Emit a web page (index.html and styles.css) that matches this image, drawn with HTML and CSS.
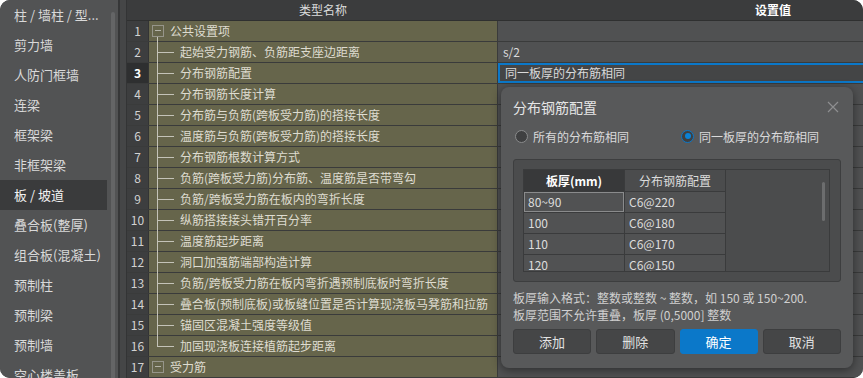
FILE: index.html
```html
<!DOCTYPE html>
<html lang="zh-CN">
<head>
<meta charset="utf-8">
<title>分布钢筋配置</title>
<link rel="stylesheet" href="styles.css">
</head>
<body>
<div class="app">
  <aside class="sidebar">
    <ul class="nav">
      <li>柱 / 墙柱 / 型...</li>
      <li>剪力墙</li>
      <li>人防门框墙</li>
      <li>连梁</li>
      <li>框架梁</li>
      <li>非框架梁</li>
      <li class="active">板 / 坡道</li>
      <li>叠合板(整厚)</li>
      <li>组合板(混凝土)</li>
      <li>预制柱</li>
      <li>预制梁</li>
      <li>预制墙</li>
      <li>空心楼盖板</li>
    </ul>
    <div class="sb-track"><div class="sb-thumb"></div></div>
  </aside>
  <div class="divider"></div>
  <div class="gap"></div>
  <div class="grid">
    <div class="row head">
      <div class="c-num"></div>
      <div class="c-name">类型名称</div>
      <div class="c-val">设置值</div>
    </div>
    <div class="row">
      <div class="c-num">1</div>
      <div class="c-name group open"><span class="exp"></span>公共设置项</div>
      <div class="c-val"></div>
    </div>
    <div class="row">
      <div class="c-num">2</div>
      <div class="c-name child"><span class="tree"></span>起始受力钢筋、负筋距支座边距离</div>
      <div class="c-val">s/2</div>
    </div>
    <div class="row">
      <div class="c-num sel">3</div>
      <div class="c-name child"><span class="tree"></span>分布钢筋配置</div>
      <div class="c-val edit">同一板厚的分布筋相同</div>
    </div>
    <div class="row">
      <div class="c-num">4</div>
      <div class="c-name child"><span class="tree"></span>分布钢筋长度计算</div>
      <div class="c-val"></div>
    </div>
    <div class="row">
      <div class="c-num">5</div>
      <div class="c-name child"><span class="tree"></span>分布筋与负筋(跨板受力筋)的搭接长度</div>
      <div class="c-val"></div>
    </div>
    <div class="row">
      <div class="c-num">6</div>
      <div class="c-name child"><span class="tree"></span>温度筋与负筋(跨板受力筋)的搭接长度</div>
      <div class="c-val"></div>
    </div>
    <div class="row">
      <div class="c-num">7</div>
      <div class="c-name child"><span class="tree"></span>分布钢筋根数计算方式</div>
      <div class="c-val"></div>
    </div>
    <div class="row">
      <div class="c-num">8</div>
      <div class="c-name child"><span class="tree"></span>负筋(跨板受力筋)分布筋、温度筋是否带弯勾</div>
      <div class="c-val"></div>
    </div>
    <div class="row">
      <div class="c-num">9</div>
      <div class="c-name child"><span class="tree"></span>负筋/跨板受力筋在板内的弯折长度</div>
      <div class="c-val"></div>
    </div>
    <div class="row">
      <div class="c-num">10</div>
      <div class="c-name child"><span class="tree"></span>纵筋搭接接头错开百分率</div>
      <div class="c-val"></div>
    </div>
    <div class="row">
      <div class="c-num">11</div>
      <div class="c-name child"><span class="tree"></span>温度筋起步距离</div>
      <div class="c-val"></div>
    </div>
    <div class="row">
      <div class="c-num">12</div>
      <div class="c-name child"><span class="tree"></span>洞口加强筋端部构造计算</div>
      <div class="c-val"></div>
    </div>
    <div class="row">
      <div class="c-num">13</div>
      <div class="c-name child"><span class="tree"></span>负筋/跨板受力筋在板内弯折遇预制底板时弯折长度</div>
      <div class="c-val"></div>
    </div>
    <div class="row">
      <div class="c-num">14</div>
      <div class="c-name child"><span class="tree"></span>叠合板(预制底板)或板缝位置是否计算现浇板马凳筋和拉筋</div>
      <div class="c-val"></div>
    </div>
    <div class="row">
      <div class="c-num">15</div>
      <div class="c-name child"><span class="tree"></span>锚固区混凝土强度等级值</div>
      <div class="c-val"></div>
    </div>
    <div class="row">
      <div class="c-num">16</div>
      <div class="c-name child last"><span class="tree"></span>加固现浇板连接植筋起步距离</div>
      <div class="c-val"></div>
    </div>
    <div class="row">
      <div class="c-num">17</div>
      <div class="c-name group"><span class="exp"></span>受力筋</div>
      <div class="c-val"></div>
    </div>
  </div>

  <div class="dialog">
    <div class="d-title">
      <span>分布钢筋配置</span>
      <svg class="close" width="12" height="12" viewBox="0 0 12 12"><path d="M1 1 L11 11 M11 1 L1 11" stroke="#8e8f90" stroke-width="1.2" fill="none"/></svg>
    </div>
    <div class="d-radios">
      <label class="opt"><span class="radio"></span>所有的分布筋相同</label>
      <label class="opt"><span class="radio on"></span>同一板厚的分布筋相同</label>
    </div>
    <div class="panel">
      <div class="tbl">
        <div class="tbl-cols">
          <div class="t-row t-head">
            <div class="t-cell h1">板厚(mm)</div>
            <div class="t-cell h2">分布钢筋配置</div>
          </div>
          <div class="t-row">
            <div class="t-cell cur">80~90</div>
            <div class="t-cell">C6@220</div>
          </div>
          <div class="t-row">
            <div class="t-cell">100</div>
            <div class="t-cell">C6@180</div>
          </div>
          <div class="t-row">
            <div class="t-cell">110</div>
            <div class="t-cell">C6@170</div>
          </div>
          <div class="t-row">
            <div class="t-cell">120</div>
            <div class="t-cell">C6@150</div>
          </div>
        </div>
        <div class="tbl-rest"><div class="t-thumb"></div></div>
      </div>
    </div>
    <p class="hint">板厚输入格式：整数或整数 ~ 整数，如 150 或 150~200.<br>板厚范围不允许重叠，板厚 (0,5000] 整数</p>
    <div class="btns">
      <button class="btn">添加</button>
      <button class="btn">删除</button>
      <button class="btn primary">确定</button>
      <button class="btn">取消</button>
    </div>
  </div>
</div>
</body>
</html>
```

FILE: styles.css
```css
* { box-sizing: border-box; }

body {
  margin: 0;
  background: #ffffff;
  font-family: "Noto Sans CJK SC", "Noto Sans", sans-serif;
}

.app {
  width: 863px;
  height: 378px;
  border-radius: 10px;
  overflow: hidden;
  display: flex;
  background: #3b3c3d;
  position: relative;
}

/* ---------- sidebar ---------- */
.sidebar {
  width: 118px;
  flex: none;
  display: flex;
  background: #525354;
}

.nav {
  list-style: none;
  margin: 0;
  padding: 0;
  width: 107px;
  flex: none;
}

.nav li {
  height: 30px;
  line-height: 30px;
  padding-left: 14px;
  font-size: 13px;
  color: #d9d9d9;
  white-space: nowrap;
}

.nav li.active {
  background: #3a3b3c;
  color: #f2f2f2;
}

.sb-track {
  width: 11px;
  flex: none;
  padding: 12px 0 0 4px;
}

.sb-thumb {
  width: 4px;
  height: 400px;
  border-radius: 2px;
  background: #646566;
}

.divider {
  width: 2px;
  flex: none;
  background: #363738;
}

.gap {
  width: 6px;
  flex: none;
  background: #454647;
}

/* ---------- grid ---------- */
.grid {
  flex: none;
  width: 1000px;
  border-left: 1px solid #333435;
}

.row {
  display: flex;
  height: 21px;
  border-bottom: 1px solid #3a3b3b;
  font-size: 12px;
  line-height: 20px;
}

.c-num {
  width: 22px;
  flex: none;
  text-align: center;
  background: #3d3e3f;
  border-right: 1px solid #333435;
  color: #d2d2d2;
}

.c-num.sel {
  background: #2e2f30;
  color: #ffffff;
  font-weight: bold;
}

.c-name {
  width: 349px;
  flex: none;
  background: #66654b;
  border-right: 1px solid #3a3b3b;
  color: #dedcd0;
  display: flex;
  align-items: center;
  padding-left: 3px;
  position: relative;
  white-space: nowrap;
}

.c-val {
  width: 550px;
  flex: none;
  background: #505152;
  color: #dadada;
  padding-left: 5px;
  white-space: nowrap;
}

.c-val.edit {
  background: #444546;
  box-shadow: inset 0 0 0 2px #0b78c9;
  padding-left: 7px;
}

.row.head {
  border-bottom-color: #2f3030;
}

.row.head .c-num,
.row.head .c-name,
.row.head .c-val {
  background: #3b3c3d;
  border-right-color: #3b3c3d;
  color: #dcdcdc;
  justify-content: center;
  text-align: center;
  padding-left: 0;
}

.row.head .c-val {
  font-weight: bold;
  color: #ffffff;
}

/* tree */
.tree {
  width: 28px;
  flex: none;
  height: 20px;
}

.c-name.child::before {
  content: "";
  position: absolute;
  left: 8px;
  top: 0;
  bottom: -1px;
  width: 1px;
  background: #c4c3b8;
}

.c-name.child.last::before {
  bottom: 10px;
}

.c-name.child::after {
  content: "";
  position: absolute;
  left: 8px;
  top: 10px;
  width: 17px;
  height: 1px;
  background: #c4c3b8;
}

.exp {
  width: 12px;
  height: 12px;
  flex: none;
  margin-right: 6px;
  border: 1px solid #96958a;
  position: relative;
}

.exp::before {
  content: "";
  position: absolute;
  left: 2px;
  right: 2px;
  top: 4px;
  height: 1px;
  background: #b4b3a8;
}

.c-name.group.open::after {
  content: "";
  position: absolute;
  left: 8px;
  top: 16px;
  bottom: -1px;
  width: 1px;
  background: #c4c3b8;
}

/* ---------- dialog ---------- */
.dialog {
  position: absolute;
  left: 501px;
  top: 87px;
  width: 352px;
  height: 281px;
  padding: 0 12px;
  background: #58595a;
  border-radius: 8px;
  box-shadow: 0 2px 10px rgba(0, 0, 0, 0.45);
  display: flex;
  flex-direction: column;
  color: #dcdcdc;
}

.d-title {
  height: 40px;
  flex: none;
  display: flex;
  align-items: center;
  justify-content: space-between;
  font-size: 14px;
  color: #e6e6e6;
}

.close {
  margin-right: 2px;
}

.d-radios {
  height: 18px;
  flex: none;
  display: flex;
  align-items: center;
  font-size: 12px;
  color: #dadada;
}

.opt {
  display: flex;
  align-items: center;
}

.opt:first-child {
  width: 168px;
  padding-left: 2px;
}

.radio {
  width: 13px;
  height: 13px;
  border-radius: 50%;
  border: 1px solid #8a8b8c;
  background: #3f4041;
  margin-right: 5px;
  flex: none;
  display: flex;
  align-items: center;
  justify-content: center;
}

.radio.on {
  border-color: #0b78c9;
}

.radio.on::after {
  content: "";
  width: 6px;
  height: 6px;
  border-radius: 50%;
  background: #0b82d6;
}

.panel {
  margin-top: 14px;
  height: 123px;
  flex: none;
  border: 1px solid #3d3e3f;
  border-radius: 3px;
  background: #4b4c4d;
  padding: 9px 10px 9px 9px;
}

.tbl {
  height: 103px;
  border: 1px solid #3a3b3c;
  display: flex;
  overflow: hidden;
}

.tbl-cols {
  width: 202px;
  flex: none;
}

.t-row {
  display: flex;
  height: 21px;
  border-bottom: 1px solid #3a3b3c;
  font-size: 12px;
  line-height: 20px;
}

.t-cell {
  width: 101px;
  flex: none;
  background: #515253;
  border-right: 1px solid #3a3b3c;
  padding-left: 4px;
  color: #dcdcdc;
}

.t-row.t-head {
  height: 22px;
  line-height: 21px;
}

.t-cell.h1 {
  background: #38393a;
  color: #ffffff;
  font-weight: bold;
  text-align: center;
  padding-left: 0;
}

.t-cell.h2 {
  background: #4b4c4d;
  text-align: center;
  padding-left: 0;
}

.t-cell.cur {
  box-shadow: inset 0 0 0 1px #8a8b8c;
}

.tbl-rest {
  flex: 1;
  background: #4b4c4d;
  padding: 12px 0 0 96px;
}

.t-thumb {
  width: 3px;
  height: 39px;
  border-radius: 2px;
  background: #6c6d6e;
}

.hint {
  margin: 7px 0 0;
  font-size: 12px;
  line-height: 17px;
  color: #d0d0d0;
  white-space: nowrap;
}

.btns {
  margin-top: 6px;
  display: flex;
  gap: 5px;
}

.btn {
  flex: 1;
  height: 25px;
  border: 1px solid #3d3e3f;
  border-radius: 3px;
  background: #454647;
  color: #e2e2e2;
  font-family: inherit;
  font-size: 13px;
  padding: 0;
}

.btn.primary {
  background: #0b78c9;
  border-color: #0b78c9;
  color: #ffffff;
}
```
